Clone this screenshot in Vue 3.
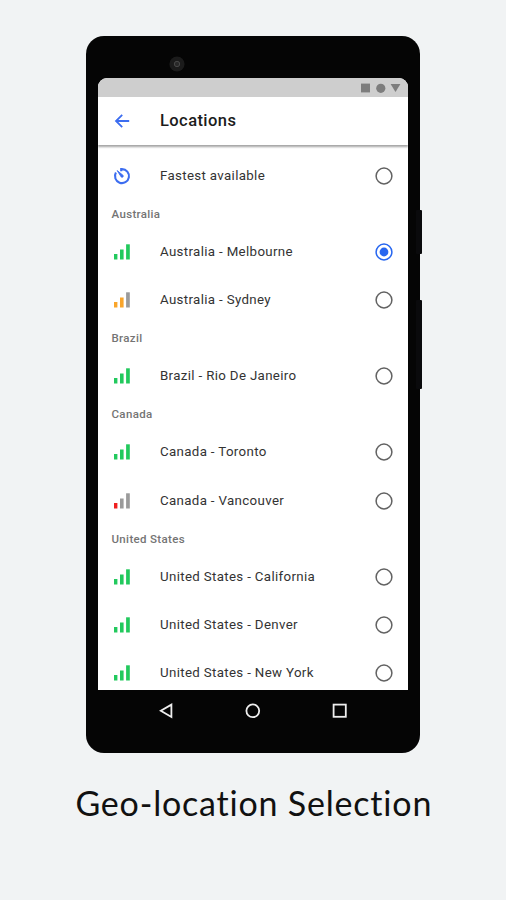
<script setup>
const groups = [
  { items: [{ name: 'Fastest available', speed: 'auto' }] },
  { title: 'Australia', items: [{ name: 'Australia - Melbourne', speed: 'good', on: true }, { name: 'Australia - Sydney', speed: 'fair' }] },
  { title: 'Brazil', items: [{ name: 'Brazil - Rio De Janeiro', speed: 'good' }] },
  { title: 'Canada', items: [{ name: 'Canada - Toronto', speed: 'good' }, { name: 'Canada - Vancouver', speed: 'poor' }] },
  { title: 'United States', items: [{ name: 'United States - California', speed: 'good' }, { name: 'United States - Denver', speed: 'good' }, { name: 'United States - New York', speed: 'good' }] },
]
const bars = {
  good: ['#22c95d', '#22c95d', '#22c95d'],
  fair: ['#f9a52b', '#f9a52b', '#9b9b9b'],
  poor: ['#f02020', '#9b9b9b', '#9b9b9b'],
}
</script>

<template>
  <main class="page">
    <div class="phone">
      <i class="key power"></i>
      <i class="key volume"></i>
      <div class="bezel">
        <svg class="camera" width="16" height="16" viewBox="0 0 16 16">
          <circle cx="8" cy="8" r="7.6" fill="#1b1b1b" />
          <circle cx="8" cy="8" r="2.7" fill="#292929" stroke="#484848" stroke-width="1" />
        </svg>
      </div>
      <div class="screen">
        <div class="status">
          <svg width="42" height="12" viewBox="0 0 42 12" fill="#7d7d7d">
            <rect x="1" y="1.6" width="9" height="8.8" />
            <circle cx="20.8" cy="6.3" r="4.6" />
            <path d="M30.6 1.9h9.8l-4.9 8.2z" />
          </svg>
        </div>
        <header class="bar">
          <svg class="back" width="16" height="14" viewBox="0 0 16 14" fill="none" stroke="#3c6df0" stroke-width="1.8">
            <path d="M15.2 7H2M8.2 .8L2 7l6.2 6.2" />
          </svg>
          <h1>Locations</h1>
        </header>
        <div class="list">
          <section v-for="(g, n) in groups" :key="n">
            <h2 v-if="g.title">{{ g.title }}</h2>
            <div v-for="item in g.items" :key="item.name" class="row">
              <svg v-if="item.speed === 'auto'" class="icon" width="18" height="18" viewBox="0 0 18 18" fill="none" stroke="#3c6df0">
                <path d="M8.2 4.2V2.1H9A7 7 0 1 1 2.9 5.6" stroke-width="2.1" />
                <path d="M4.2 3.6l5.7 4.6a1.2 1.2 0 0 1-1.7 1.7z" fill="#3c6df0" stroke-width=".9" />
              </svg>
              <svg v-else class="icon" width="18" height="18" viewBox="0 0 18 18">
                <rect x="1" y="11" width="3.4" height="5.5" :fill="bars[item.speed][0]" />
                <rect x="7" y="6.5" width="3.6" height="10" :fill="bars[item.speed][1]" />
                <rect x="13.1" y="1.3" width="3.7" height="15.2" :fill="bars[item.speed][2]" />
              </svg>
              <span class="name">{{ item.name }}</span>
              <svg class="radio" :class="{ on: item.on }" width="18" height="18" viewBox="0 0 18 18">
                <circle cx="9" cy="9" r="7.9" fill="none" stroke="currentColor" stroke-width="1.5" />
                <circle v-if="item.on" cx="9" cy="9" r="4.4" fill="currentColor" />
              </svg>
            </div>
          </section>
        </div>
      </div>
      <nav class="nav">
        <svg width="16" height="16" viewBox="0 0 16 16"><path d="M13.4 1.6v12.4L2.8 7.8z" /></svg>
        <svg width="16" height="16" viewBox="0 0 16 16"><circle cx="7.8" cy="7.8" r="6.4" /></svg>
        <svg width="16" height="16" viewBox="0 0 16 16"><rect x="1.6" y="1.6" width="12.2" height="12.2" /></svg>
      </nav>
    </div>
    <p class="caption">Geo-location Selection</p>
  </main>
</template>

<style>
body { background: #f1f3f4; }
</style>

<style scoped>
.page {
  height: 900px;
  box-sizing: border-box;
  padding-top: 36px;
  display: flex;
  flex-direction: column;
  align-items: center;
  overflow: hidden;
  background: #f1f3f4;
  font-family: Roboto, "Liberation Sans", sans-serif;
}
.phone {
  position: relative;
  flex: none;
  width: 334px;
  height: 717px;
  box-sizing: border-box;
  padding: 0 12px;
  border-radius: 18px;
  background: #050505;
}
.key { position: absolute; right: -2px; width: 6px; background: #0a0a0c; border-radius: 1px; }
.power { top: 174px; height: 44px; }
.volume { top: 264px; height: 89px; }
.bezel { height: 42px; box-sizing: border-box; padding: 20px 0 0 71px; }
.camera { display: block; }
.screen {
  height: 612px;
  overflow: hidden;
  display: flex;
  flex-direction: column;
  border-radius: 9px 9px 0 0;
  background: #fff;
}
.status {
  flex: none;
  height: 19px;
  display: flex;
  align-items: center;
  justify-content: flex-end;
  padding-right: 6px;
  background: #cecece;
}
.bar {
  flex: none;
  height: 47.5px;
  display: flex;
  align-items: center;
  padding-left: 16px;
  box-shadow: 0 2px 2px rgba(0, 0, 0, .36);
}
.back { margin-right: 30px; }
h1 { margin: 0; font-size: 16.5px; font-weight: 500; letter-spacing: .42px; color: #1c1c1c; }
.list { padding-top: 7px; }
h2 {
  margin: 0;
  height: 27.8px;
  padding-left: 13.5px;
  font-size: 11.5px;
  line-height: 29px;
  font-weight: 500;
  letter-spacing: .34px;
  color: #747474;
}
.row { height: 48.3px; display: flex; align-items: center; padding: 0 15px; }
.icon { margin-right: 29px; }
.name { flex: 1; padding-bottom: .6px; font-size: 13.3px; letter-spacing: .34px; color: #333; }
.radio { color: #626262; }
.radio.on { color: #2766f0; }
.nav { height: 41px; display: flex; justify-content: space-between; align-items: center; padding: 0 60px; }
.nav svg { fill: none; stroke: #eee; stroke-width: 1.8; }
.caption { margin: 28px 0 0; padding-left: 1.6px; font-family: Lato, sans-serif; font-size: 34px; line-height: 44px; letter-spacing: .8px; color: #111; white-space: nowrap; }
</style>
